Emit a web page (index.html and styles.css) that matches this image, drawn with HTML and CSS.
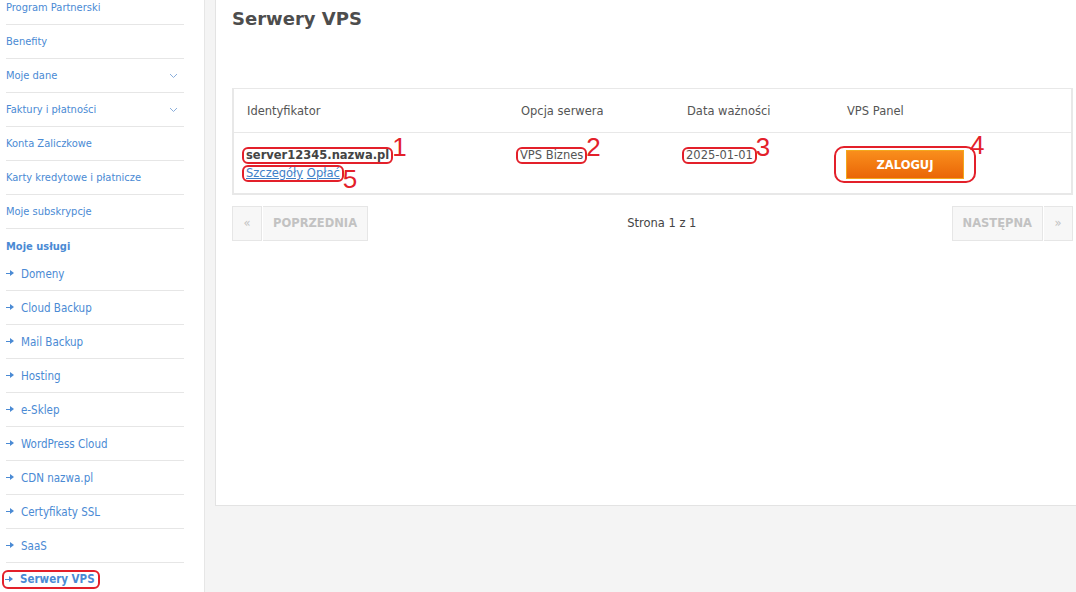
FILE: index.html
```html
<!DOCTYPE html>
<html lang="pl">
<head>
    <meta charset="UTF-8">
    <title>Serwery VPS</title>
    <link rel="stylesheet" href="styles.css">
</head>
<body>
    <div class="layout">
        <aside class="sidebar">
            <ul class="menu">
                <li class="menu-item"><a href="#">Program Partnerski</a></li>
                <li class="menu-item"><a href="#">Benefity</a></li>
                <li class="menu-item has-sub"><a href="#">Moje dane</a>
                    <svg class="chevron" width="9" height="6" viewBox="0 0 9 6"><path d="M1 1l3.5 3.5L8 1" fill="none" stroke="#8aaedb" stroke-width="1"/></svg>
                </li>
                <li class="menu-item has-sub"><a href="#">Faktury i płatności</a>
                    <svg class="chevron" width="9" height="6" viewBox="0 0 9 6"><path d="M1 1l3.5 3.5L8 1" fill="none" stroke="#8aaedb" stroke-width="1"/></svg>
                </li>
                <li class="menu-item"><a href="#">Konta Zaliczkowe</a></li>
                <li class="menu-item"><a href="#">Karty kredytowe i płatnicze</a></li>
                <li class="menu-item"><a href="#">Moje subskrypcje</a></li>
                <li class="menu-head">Moje usługi</li>
                <li class="menu-item sub"><a href="#"><span class="arr"></span>Domeny</a></li>
                <li class="menu-item sub"><a href="#"><span class="arr"></span>Cloud Backup</a></li>
                <li class="menu-item sub"><a href="#"><span class="arr"></span>Mail Backup</a></li>
                <li class="menu-item sub"><a href="#"><span class="arr"></span>Hosting</a></li>
                <li class="menu-item sub"><a href="#"><span class="arr"></span>e-Sklep</a></li>
                <li class="menu-item sub"><a href="#"><span class="arr"></span>WordPress Cloud</a></li>
                <li class="menu-item sub"><a href="#"><span class="arr"></span>CDN nazwa.pl</a></li>
                <li class="menu-item sub"><a href="#"><span class="arr"></span>Certyfikaty SSL</a></li>
                <li class="menu-item sub"><a href="#"><span class="arr"></span>SaaS</a></li>
                <li class="menu-item sub active"><a href="#" class="mark mark-side"><span class="arr"></span>Serwery VPS</a></li>
            </ul>
        </aside>

        <main class="content">
            <div class="card">
                <h1 class="title">Serwery VPS</h1>

                <table class="vps-table">
                    <thead>
                        <tr>
                            <th class="c-id">Identyfikator</th>
                            <th class="c-opt">Opcja serwera</th>
                            <th class="c-date">Data ważności</th>
                            <th class="c-panel">VPS Panel</th>
                        </tr>
                    </thead>
                    <tbody>
                        <tr>
                            <td class="c-id">
                                <div><span class="mark server-name">server12345.nazwa.pl<span class="num">1</span></span></div>
                                <div class="links"><span class="mark"><a href="#">Szczegóły</a> <a href="#">Opłać</a><span class="num num-low">5</span></span></div>
                            </td>
                            <td class="c-opt"><span class="mark">VPS Biznes<span class="num">2</span></span></td>
                            <td class="c-date"><span class="mark">2025-01-01<span class="num">3</span></span></td>
                            <td class="c-panel">
                                <span class="mark mark-btn"><button class="btn-login">ZALOGUJ</button><span class="num">4</span></span>
                            </td>
                        </tr>
                    </tbody>
                </table>

                <div class="pager">
                    <div class="pager-group">
                        <span class="pg-btn pg-arrow">&laquo;</span>
                        <span class="pg-btn">POPRZEDNIA</span>
                    </div>
                    <div class="pager-info">Strona 1 z 1</div>
                    <div class="pager-group">
                        <span class="pg-btn">NASTĘPNA</span>
                        <span class="pg-btn pg-arrow">&raquo;</span>
                    </div>
                </div>
            </div>
        </main>
    </div>
</body>
</html>
```

FILE: styles.css
```css
html, body {
    margin: 0;
    padding: 0;
    height: 100%;
    overflow: hidden;
}

body {
    font-family: "DejaVu Sans", Verdana, sans-serif;
    font-size: 11.5px;
    color: #555;
    background-color: #f4f4f4;
}

.layout {
    display: flex;
    align-items: flex-start;
    height: 100%;
}

/* sidebar */
.sidebar {
    width: 204px;
    flex-shrink: 0;
    height: 100%;
    background-color: #fff;
    border-right: 1px solid #e6e6e6;
}

.menu {
    list-style: none;
    margin: -9px 0 0 0;
    padding: 0 20px 0 6px;
    font-family: "DejaVu Sans Condensed", "DejaVu Sans", sans-serif;
    font-size: 11px;
}

.menu-item {
    display: flex;
    align-items: center;
    justify-content: space-between;
    height: 33px;
    border-bottom: 1px solid #e6e6e6;
}

.menu-item a {
    color: #4a8ad4;
    text-decoration: none;
    display: inline-flex;
    align-items: center;
}

.menu-item .chevron {
    margin-right: 6px;
}

.menu-head {
    height: 28px;
    box-sizing: border-box;
    padding-top: 11px;
    line-height: 14px;
    font-weight: bold;
    color: #4a8ad4;
}

.menu-item.sub {
    font-size: 11.5px;
}

.menu-item.active {
    border-bottom: none;
}

.menu-item.active a {
    font-weight: bold;
}

.arr {
    position: relative;
    display: inline-block;
    width: 5px;
    height: 1.5px;
    background: #4a8ad4;
    margin-right: 10px;
}

.arr::after {
    content: "";
    position: absolute;
    right: -3px;
    top: -2.5px;
    border-left: 4px solid #4a8ad4;
    border-top: 3px solid transparent;
    border-bottom: 3px solid transparent;
}

/* content */
.content {
    flex: 1;
    padding-left: 10px;
}

.card {
    width: 874px;
    height: 481px;
    background: #fff;
    border: 1px solid #e3e3e3;
    border-top: none;
    padding: 0 16px 24px 16px;
}

.title {
    margin: 0;
    padding-top: 8px;
    height: 80px;
    font-size: 18px;
    font-weight: bold;
    color: #4d4d4d;
}

.vps-table {
    width: 841px;
    border-collapse: collapse;
    border: 2px solid #e8e8e8;
    border-top-width: 1px;
    table-layout: fixed;
}

.vps-table th {
    height: 43px;
    font-weight: normal;
    text-align: left;
    padding: 0 0 0 13px;
    color: #555;
    border-bottom: 1px solid #e8e8e8;
}

.vps-table td {
    height: 61px;
    box-sizing: border-box;
    padding: 14px 0 0 13px;
    vertical-align: top;
    color: #555;
}

.vps-table .c-id { width: 261px; }
.vps-table .c-opt { width: 153px; }
.vps-table .c-date { width: 147px; }

.vps-table td.c-panel {
    padding-top: 13px;
}

.server-name {
    font-weight: bold;
    color: #444;
}

.links {
    margin-top: 1px;
}

.links a {
    color: #3f80c8;
}

.btn-login {
    width: 118px;
    height: 29px;
    border: 1px solid #f3a71c;
    background: linear-gradient(#f98e1c, #ea6607);
    color: #fff;
    font-family: "DejaVu Sans", sans-serif;
    font-size: 11.5px;
    font-weight: bold;
    cursor: pointer;
    display: block;
}

/* red annotation boxes */
.mark {
    position: relative;
    display: inline-block;
    border: 2px solid #e3202a;
    border-radius: 6px;
    padding: 0 2px;
    margin-left: -5px;
    line-height: 13px;
}

.mark-btn {
    padding: 2px 10px;
    margin-left: -13px;
    border-radius: 10px;
}

.mark-side {
    margin-left: -4px;
    padding: 1px 3px 1px 1px;
}

.num {
    position: absolute;
    left: 100%;
    bottom: 2px;
    margin-left: 1px;
    font-family: "Liberation Sans", Arial, sans-serif;
    font-size: 26px;
    font-weight: normal;
    line-height: 26px;
    color: #e3202a;
}

.num-low {
    bottom: -12px;
}

.mark-btn .num {
    bottom: 23px;
    margin-left: -4px;
}

/* pager */
.pager {
    display: flex;
    align-items: center;
    justify-content: space-between;
    width: 841px;
    margin-top: 11px;
}

.pager-group {
    display: flex;
}

.pg-btn {
    display: flex;
    align-items: center;
    height: 33px;
    padding: 0 10px;
    background: #f7f7f7;
    border: 1px solid #e6e6e6;
    color: #c2c2c2;
    font-weight: bold;
    font-size: 11.5px;
}

.pg-btn + .pg-btn {
    border-left: none;
    margin-left: 1px;
}

.pg-arrow {
    width: 8px;
    justify-content: center;
    font-weight: normal;
}

.pager-info {
    color: #444;
    padding-left: 4px;
}
```
